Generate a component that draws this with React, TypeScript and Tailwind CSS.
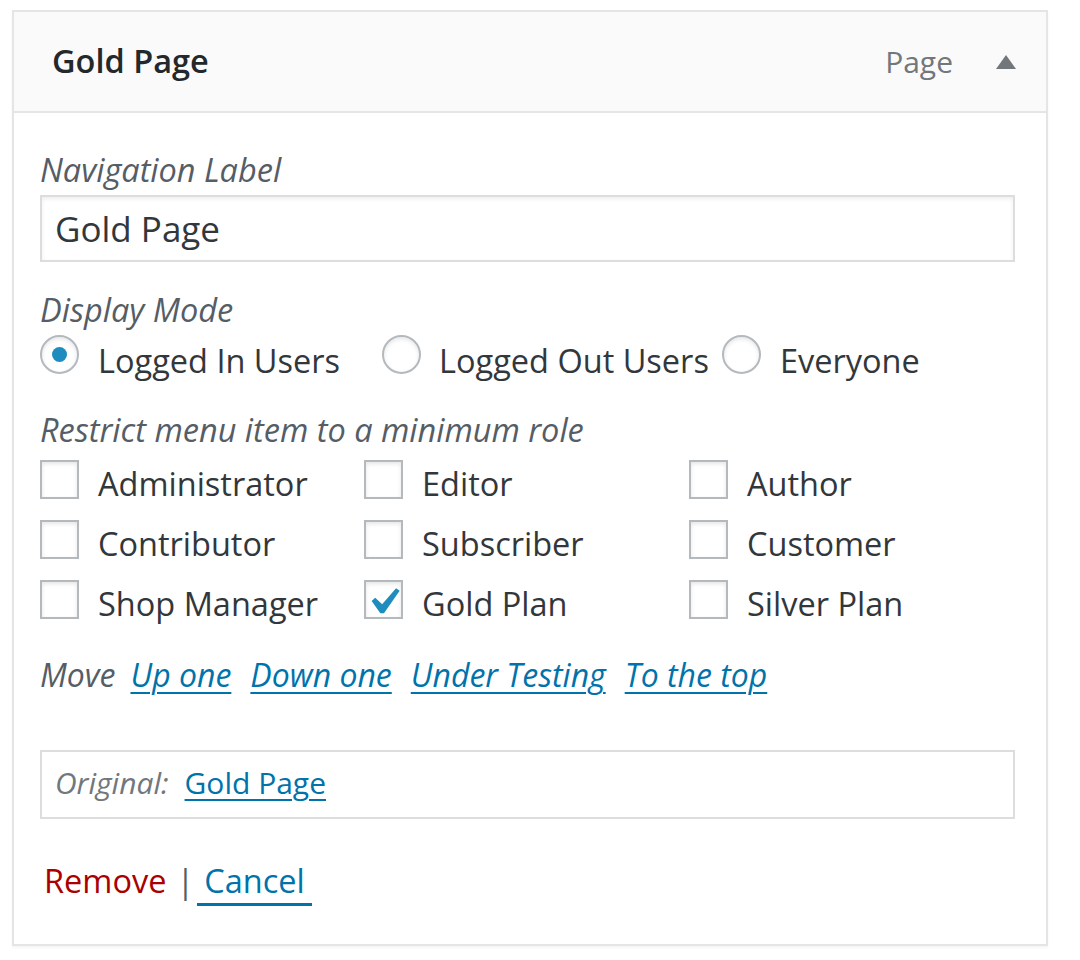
const roles = [
  ["Administrator", "Editor", "Author"],
  ["Contributor", "Subscriber", "Customer"],
  ["Shop Manager", "Gold Plan", "Silver Plan"],
];

const moveLinks = ["Up one", "Down one", "Under Testing", "To the top"];

function Checkbox({ checked }: { checked?: boolean }) {
  return (
    <span className="relative block h-[39px] w-[39px] shrink-0 border-2 border-[#b4b9be] bg-white shadow-[inset_0_2px_4px_rgba(0,0,0,0.1)]">
      {checked && (
        <svg viewBox="0 0 20 20" className="absolute left-[-10px] top-[-7px] h-[54px] w-[54px]">
          <path d="M14.83 4.89l1.34.94-5.81 8.38H9.02L5.78 9.67l1.34-1.25 2.57 2.4z" fill="#1e8cbe" />
        </svg>
      )}
    </span>
  );
}

function Radio({ checked }: { checked?: boolean }) {
  return (
    <span className="flex h-[39px] w-[39px] shrink-0 items-center justify-center rounded-full border-2 border-[#b4b9be] bg-white shadow-[inset_0_2px_4px_rgba(0,0,0,0.1)]">
      {checked && <span className="h-[15px] w-[15px] rounded-full bg-[#1e8cbe]" />}
    </span>
  );
}

export default function App() {
  return (
    <div className="min-h-[960px] bg-white pl-[12px] pt-[10px] font-['Open_Sans',sans-serif] text-[#32373c]">
      <div className="w-[1036px] border-2 border-[#e5e5e5] bg-white shadow-[0_2px_2px_rgba(0,0,0,0.04)]">
        <div className="flex h-[101px] items-center justify-between border-b-2 border-[#e5e5e5] bg-[#fafafa] pl-[38px] pr-[30px]">
          <div className="text-[32.5px] font-semibold text-[#23282d]">Gold Page</div>
          <div className="flex items-center gap-[43px]">
            <span className="text-[30px] text-[#72777c]">Page</span>
            <svg viewBox="0 0 20 14" className="h-[14px] w-[20px]">
              <path d="M10 0L20 14H0z" fill="#72777c" />
            </svg>
          </div>
        </div>

        <div className="pb-[38px] pl-[26px] pr-[31px] pt-[35px] text-[32.5px] leading-[44px]">
          <div className="italic text-[#555d66]">Navigation Label</div>
          <div className="mt-[3px] flex h-[67px] items-center border-2 border-[#dddddd] px-[13px] text-[35px] text-[#32373c] shadow-[inset_0_2px_4px_rgba(0,0,0,0.07)]">
            Gold Page
          </div>

          <div className="mt-[26px] italic text-[#555d66]">Display Mode</div>
          <div className="mt-[3px] flex h-[48px] items-start">
            <Radio checked />
            <span className="ml-[19px] mt-[4px]">Logged In Users</span>
            <span className="ml-[42px]"><Radio /></span>
            <span className="ml-[18px] mt-[4px]">Logged Out Users</span>
            <span className="ml-[13px]"><Radio /></span>
            <span className="ml-[19px] mt-[4px]">Everyone</span>
          </div>

          <div className="mt-[25px] italic text-[#555d66]">Restrict menu item to a minimum role</div>
          <div className="mt-[8px] flex flex-col">
            {roles.map((row) => (
              <div key={row[0]} className="grid h-[60px] grid-cols-[324px_325px_1fr]">
                {row.map((r) => (
                  <div key={r} className="flex items-start">
                    <Checkbox checked={r === "Gold Plan"} />
                    <span className="ml-[19px] mt-[2px]">{r}</span>
                  </div>
                ))}
              </div>
            ))}
          </div>

          <div className="mt-[13px] flex text-[32px] italic">
            <span className="text-[#555d66]">Move</span>
            {moveLinks.map((l, i) => (
              <a
                key={l}
                href="#"
                className={`${i === 0 ? "ml-[15px]" : "ml-[19px]"} text-[#0073aa] underline decoration-2 underline-offset-[5px]`}
              >
                {l}
              </a>
            ))}
          </div>

          <div className="mt-[53px] flex h-[69px] items-center border-2 border-[#dddddd] px-[13px] pb-[4px] text-[30px]">
            <span className="italic text-[#72777c]">Original:</span>
            <a href="#" className="ml-[16px] text-[#0073aa] underline decoration-2 underline-offset-[5px]">
              Gold Page
            </a>
          </div>

          <div className="mt-[40px] flex pl-[4px]">
            <a href="#" className="text-[#aa0000]">Remove</a>
            <span className="ml-[10px] text-[#555d66]">|</span>
            <a href="#" className="ml-[3px] border-b-[3px] border-[#0073aa] px-[7px] text-[#0073aa]">Cancel</a>
          </div>
        </div>
      </div>
    </div>
  );
}
